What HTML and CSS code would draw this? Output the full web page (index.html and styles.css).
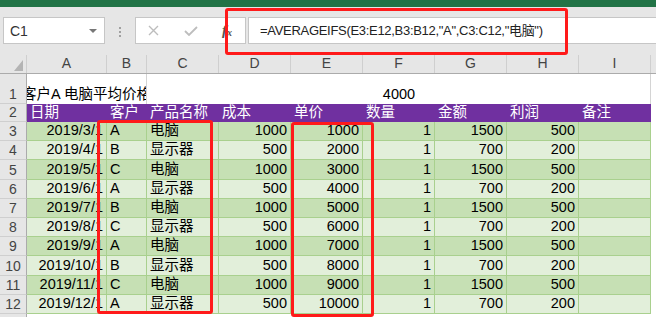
FILE: index.html
```html
<!DOCTYPE html>
<html lang="zh-CN">
<head>
  <meta charset="UTF-8">
  <title>AVERAGEIFS</title>
  <link rel="stylesheet" href="styles.css">
</head>
<body>
  <div class="app-edge"></div>

  <!-- Formula bar -->
  <div class="formula-bar">
    <div class="name-box"><span>C1</span><span class="caret"></span></div>
    <div class="grip"><i></i><i></i><i></i></div>
    <div class="fx-box">
      <svg class="btn-cancel" width="11" height="11" viewBox="0 0 11 11"><path d="M1 1L10 10M10 1L1 10" stroke="#bdbdbd" stroke-width="1.4" fill="none"/></svg>
      <svg class="btn-enter" width="14" height="10" viewBox="0 0 14 10"><path d="M1 5L5 9L13 1" stroke="#bdbdbd" stroke-width="1.8" fill="none"/></svg>
      <span class="fx">f<sub>x</sub></span>
    </div>
    <div class="formula-input">=AVERAGEIFS(E3:E12,B3:B12,"A",C3:C12,"电脑")</div>
  </div>

  <!-- Sheet -->
  <div class="sheet">
    <div class="row col-head">
      <div class="corner"><span class="corner-mark"></span></div>
      <div class="ch">A</div><div class="ch">B</div><div class="ch">C</div><div class="ch">D</div>
      <div class="ch">E</div><div class="ch">F</div><div class="ch">G</div><div class="ch">H</div>
      <div class="ch">I</div><div class="ch last"></div>
    </div>

    <div class="row title-row">
      <div class="rh">1</div>
      <div class="c title-cell"><span>客户A 电脑平均价格</span></div>
      <div class="c"></div><div class="c"></div><div class="c"></div>
      <div class="c center">4000</div>
      <div class="c"></div><div class="c"></div><div class="c edge"></div>
      <div class="j"></div>
    </div>

    <div class="row head-row">
      <div class="rh">2</div>
      <div class="c">日期</div><div class="c">客户</div><div class="c">产品名称</div><div class="c">成本</div>
      <div class="c">单价</div><div class="c">数量</div><div class="c">金额</div><div class="c">利润</div>
      <div class="c">备注</div>
      <div class="j"></div>
    </div>

    <div class="row data odd">
      <div class="rh">3</div>
      <div class="c r">2019/3/1</div><div class="c">A</div><div class="c">电脑</div><div class="c r">1000</div>
      <div class="c r">1000</div><div class="c r">1</div><div class="c r">1500</div><div class="c r">500</div>
      <div class="c"></div><div class="j"></div>
    </div>
    <div class="row data even">
      <div class="rh">4</div>
      <div class="c r">2019/4/1</div><div class="c">B</div><div class="c">显示器</div><div class="c r">500</div>
      <div class="c r">2000</div><div class="c r">1</div><div class="c r">700</div><div class="c r">200</div>
      <div class="c"></div><div class="j"></div>
    </div>
    <div class="row data odd">
      <div class="rh">5</div>
      <div class="c r">2019/5/1</div><div class="c">C</div><div class="c">电脑</div><div class="c r">1000</div>
      <div class="c r">3000</div><div class="c r">1</div><div class="c r">1500</div><div class="c r">500</div>
      <div class="c"></div><div class="j"></div>
    </div>
    <div class="row data even">
      <div class="rh">6</div>
      <div class="c r">2019/6/1</div><div class="c">A</div><div class="c">显示器</div><div class="c r">500</div>
      <div class="c r">4000</div><div class="c r">1</div><div class="c r">700</div><div class="c r">200</div>
      <div class="c"></div><div class="j"></div>
    </div>
    <div class="row data odd">
      <div class="rh">7</div>
      <div class="c r">2019/7/1</div><div class="c">B</div><div class="c">电脑</div><div class="c r">1000</div>
      <div class="c r">5000</div><div class="c r">1</div><div class="c r">1500</div><div class="c r">500</div>
      <div class="c"></div><div class="j"></div>
    </div>
    <div class="row data even">
      <div class="rh">8</div>
      <div class="c r">2019/8/1</div><div class="c">C</div><div class="c">显示器</div><div class="c r">500</div>
      <div class="c r">6000</div><div class="c r">1</div><div class="c r">700</div><div class="c r">200</div>
      <div class="c"></div><div class="j"></div>
    </div>
    <div class="row data odd">
      <div class="rh">9</div>
      <div class="c r">2019/9/1</div><div class="c">A</div><div class="c">电脑</div><div class="c r">1000</div>
      <div class="c r">7000</div><div class="c r">1</div><div class="c r">1500</div><div class="c r">500</div>
      <div class="c"></div><div class="j"></div>
    </div>
    <div class="row data even">
      <div class="rh">10</div>
      <div class="c r">2019/10/1</div><div class="c">B</div><div class="c">显示器</div><div class="c r">500</div>
      <div class="c r">8000</div><div class="c r">1</div><div class="c r">700</div><div class="c r">200</div>
      <div class="c"></div><div class="j"></div>
    </div>
    <div class="row data odd">
      <div class="rh">11</div>
      <div class="c r">2019/11/1</div><div class="c">C</div><div class="c">电脑</div><div class="c r">1000</div>
      <div class="c r">9000</div><div class="c r">1</div><div class="c r">1500</div><div class="c r">500</div>
      <div class="c"></div><div class="j"></div>
    </div>
    <div class="row data even">
      <div class="rh">12</div>
      <div class="c r">2019/12/1</div><div class="c">A</div><div class="c">显示器</div><div class="c r">500</div>
      <div class="c r">10000</div><div class="c r">1</div><div class="c r">700</div><div class="c r">200</div>
      <div class="c"></div><div class="j"></div>
    </div>
    <div class="row tail">
      <div class="rh"></div>
    </div>
  </div>

  <!-- Red annotation boxes -->
  <div class="mark mark-formula"></div>
  <div class="mark mark-criteria"></div>
  <div class="mark mark-average"></div>
</body>
</html>
```

FILE: styles.css
```css
/* General */
body {
  margin: 0;
  width: 656px;
  height: 317px;
  overflow: hidden;
  position: relative;
  background: #fff;
  font-family: "Liberation Sans", "Noto Sans CJK SC", sans-serif;
  color: #000;
}

.app-edge {
  height: 7px;
  background: #217346;
}

/* Formula bar */
.formula-bar {
  height: 48px;
  box-sizing: border-box;
  padding-top: 10px;
  background: #e6e6e6;
  display: flex;
  align-items: flex-start;
}

.name-box {
  margin-left: 3px;
  width: 102px;
  height: 27px;
  box-sizing: border-box;
  border: 1px solid #c6c6c6;
  background: #fff;
  display: flex;
  align-items: center;
  justify-content: space-between;
  padding: 0 7px 0 6px;
  font-size: 14px;
  color: #333;
}

.caret {
  width: 0;
  height: 0;
  border-left: 4px solid transparent;
  border-right: 4px solid transparent;
  border-top: 4px solid #777;
}

.grip {
  width: 2px;
  margin: 10px 14px 0 14px;
  display: flex;
  flex-direction: column;
  gap: 2px;
}

.grip i {
  display: block;
  width: 2px;
  height: 2px;
  background: #a0a0a0;
}

.fx-box {
  width: 111px;
  height: 27px;
  box-sizing: border-box;
  border: 1px solid #c6c6c6;
  background: #fff;
  display: flex;
  align-items: center;
  padding-left: 12px;
}

.btn-cancel {
  margin-right: 25px;
}

.btn-enter {
  margin-right: 24px;
}

.fx {
  font-family: "Liberation Serif", serif;
  font-style: italic;
  font-weight: bold;
  font-size: 15px;
  color: #555;
  line-height: 1;
}

.fx sub {
  font-size: 10px;
  vertical-align: -1px;
}

.formula-input {
  flex: 1;
  margin-left: 2px;
  height: 27px;
  box-sizing: border-box;
  border: 1px solid #c6c6c6;
  border-right: none;
  background: #fff;
  padding-left: 11px;
  font-size: 13px;
  letter-spacing: -0.3px;
  line-height: 25px;
  color: #222;
  white-space: nowrap;
}

/* Sheet grid */
.row {
  display: grid;
  grid-template-columns: 27px 80px 40px 72px 72px 72px 72px 72px 72px 72px 1fr;
}

.row > div {
  box-sizing: border-box;
  overflow: hidden;
  white-space: nowrap;
}

.col-head {
  height: 18px;
  background: #e6e6e6;
  border-bottom: 1px solid #ababab;
}

.corner {
  position: relative;
  border-right: 1px solid #cfcfcf;
}

.corner-mark {
  position: absolute;
  right: 3px;
  bottom: 2px;
  width: 9px;
  height: 11px;
  background: #b4b4b4;
  clip-path: polygon(100% 0, 100% 100%, 0 100%);
}

.ch {
  border-right: 1px solid #cfcfcf;
  text-align: center;
  font-size: 14px;
  line-height: 17px;
  color: #444;
}

.ch.last {
  border-right: none;
}

.rh {
  background: #e6e6e6;
  border-right: 1px solid #ababab;
  border-bottom: 1px solid #cfcfcf;
  display: flex;
  align-items: flex-end;
  justify-content: center;
  font-size: 14px;
  line-height: 17px;
  color: #444;
}

.c {
  display: flex;
  align-items: flex-end;
  padding: 0 3px 1px 3px;
  font-size: 14.5px;
  line-height: 17px;
}

.c.r {
  justify-content: flex-end;
}

.c.center {
  justify-content: center;
}

/* Row 1 */
.title-row {
  height: 30px;
}

.title-cell {
  grid-column: span 2;
  border-right: 1px solid #d4d4d4;
  padding-left: 0;
}

.title-cell span {
  margin-left: -5px;
}

.title-row .edge {
  border-right: 1px solid #d4d4d4;
}

/* Row 2 */
.head-row {
  height: 18px;
}

.head-row .c {
  background: #7030a0;
  color: #fff;
  padding-left: 3px;
}

/* Data rows */
.data {
  height: 19.2px;
}

.data .c {
  border-right: 1px solid #a9d08e;
  border-bottom: 1px solid #a9d08e;
}

.data.odd .c {
  background: #c6e0b4;
}

.data.even .c {
  background: #e2efda;
}

.tail {
  height: 10px;
}

/* Annotation boxes */
.mark {
  position: absolute;
  box-sizing: border-box;
  border: 3px solid #ff1a1a;
  border-radius: 3px;
}

.mark-formula {
  left: 225px;
  top: 8px;
  width: 343px;
  height: 47px;
}

.mark-criteria {
  left: 97px;
  top: 120px;
  width: 116px;
  height: 194px;
}

.mark-average {
  left: 291px;
  top: 122px;
  width: 83px;
  height: 195px;
}
```
